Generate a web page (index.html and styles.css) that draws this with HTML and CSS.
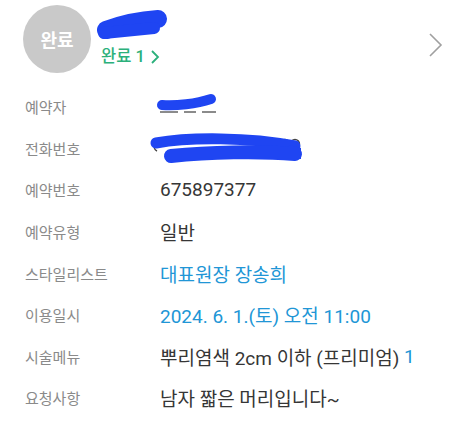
FILE: index.html
```html
<!DOCTYPE html>
<html lang="ko">
<head>
<meta charset="utf-8">
<link rel="stylesheet" href="styles.css">
</head>
<body>
<div class="page">
  <div class="header">
    <div class="badge">완료</div>
    <div class="head-info">
      <div class="name">
        <svg width="80" height="32" viewBox="0 0 80 32">
          <path d="M12 14 q -5 3 -1 7" stroke="#222" stroke-width="1.8" fill="none"/>
          <path d="M12 22 C 28 16, 48 12, 64 11" stroke="#1f45f2" stroke-width="18" stroke-linecap="round" fill="none"/>
          <path d="M10 25 L 60 20" stroke="#1f45f2" stroke-width="12" stroke-linecap="round" fill="none"/>
        </svg>
      </div>
      <div class="status">완료 1
        <svg class="gt" width="10" height="16" viewBox="0 0 10 16">
          <path d="M2 2 L8 8 L2 14" stroke="#2bb07b" stroke-width="1.8" fill="none"/>
        </svg>
      </div>
    </div>
    <svg class="chev" width="16" height="26" viewBox="0 0 16 26">
      <path d="M2 2 L13 13 L2 24" stroke="#a0a0a0" stroke-width="1.6" fill="none"/>
    </svg>
  </div>
  <div class="rows">
    <div class="row"><div class="label">예약자</div><div class="value">
      <svg class="blob1" width="70" height="26" viewBox="0 0 70 26">
        <path d="M4 21 H 22 M 28 21 H 40 M 46 21 H 60" stroke="#666" stroke-width="1.4"/>
        <path d="M6 14 C 20 15, 40 13, 55 8" stroke="#1f45f2" stroke-width="10" stroke-linecap="round" fill="none"/>
      </svg>
    </div></div>
    <div class="row"><div class="label">전화번호</div><div class="value">
      <svg class="blob2" width="160" height="34" viewBox="0 0 160 34">
        <circle cx="136" cy="12" r="4.5" stroke="#444" stroke-width="1.4" fill="none"/>
        <circle cx="146" cy="12" r="4.5" stroke="#444" stroke-width="1.4" fill="none"/>
        <path d="M6 13 q -2 4 2 6" stroke="#444" stroke-width="1.4" fill="none"/>
        <path d="M7 11 C 40 5, 100 5, 146 14" stroke="#1f45f2" stroke-width="11" stroke-linecap="round" fill="none"/>
        <path d="M22 24 C 60 20, 110 19, 146 22" stroke="#1f45f2" stroke-width="14" stroke-linecap="round" fill="none"/>
        <path d="M140 13 L 152 16 L 152 27 L 140 27 Z" fill="#1f45f2"/>
      </svg>
    </div></div>
    <div class="row"><div class="label">예약번호</div><div class="value">675897377</div></div>
    <div class="row"><div class="label">예약유형</div><div class="value">일반</div></div>
    <div class="row"><div class="label">스타일리스트</div><div class="value blue">대표원장 장송희</div></div>
    <div class="row"><div class="label">이용일시</div><div class="value blue">2024. 6. 1.(토) 오전 11:00</div></div>
    <div class="row"><div class="label">시술메뉴</div><div class="value">뿌리염색 2cm 이하 (프리미엄) <span class="blue">1</span></div></div>
    <div class="row"><div class="label">요청사항</div><div class="value">남자 짧은 머리입니다~</div></div>
  </div>
</div>
</body>
</html>
```
FILE: styles.css
```css
html, body {
  margin: 0;
  padding: 0;
  background: #fff;
}
body {
  font-family: Roboto, "Noto Sans CJK KR", sans-serif;
  width: 466px;
  height: 421px;
  overflow: hidden;
}
.page {
  padding: 5px 0 0 0;
}
.header {
  display: flex;
  align-items: flex-start;
  height: 81px;
  padding-left: 23px;
  padding-right: 22px;
}
.badge {
  width: 68px;
  height: 68px;
  border-radius: 50%;
  background: #c9c9c9;
  color: #fff;
  font-weight: 700;
  font-size: 18px;
  display: flex;
  align-items: center;
  justify-content: center;
  flex-shrink: 0;
}
.head-info {
  margin-left: 9px;
  display: flex;
  flex-direction: column;
  flex: 1;
}
.name {
  height: 32px;
  margin-top: 3px;
  margin-left: -6px;
}
.name svg { display: block; }
.status {
  color: #2bb07b;
  font-size: 16.5px;
  font-weight: 500;
  line-height: 20px;
  margin-left: 1px;
  margin-top: 7px;
  display: flex;
  align-items: center;
  gap: 5px;
}
.gt { display: block; }
.chev {
  margin-top: 27px;
}
.rows {
  display: flex;
  flex-direction: column;
}
.row {
  height: 41.6px;
  display: flex;
  align-items: center;
  padding-left: 25px;
}
.label {
  width: 135px;
  color: #8a8a8a;
  font-size: 15px;
}
.value {
  color: #363636;
  font-size: 19px;
  display: flex;
  align-items: center;
  white-space: pre;
}
.value svg { display: block; }
.blob1 { margin-left: -4px; margin-top: -6px; }
.blob2 { margin-left: -11px; margin-top: 2px; }
.blue {
  color: #2196d6;
}
```
